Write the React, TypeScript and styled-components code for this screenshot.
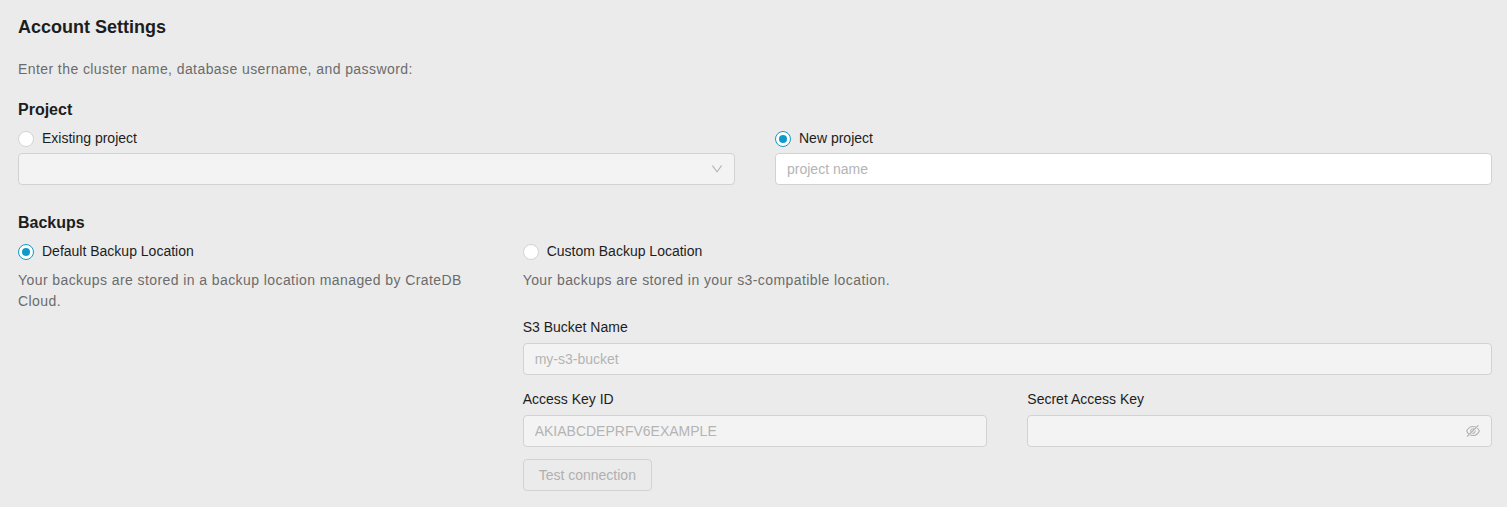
import React, { useState } from "react";
import styled, { createGlobalStyle, css } from "styled-components";
import { AiOutlineDown, AiOutlineEyeInvisible } from "react-icons/ai";

const GlobalStyle = createGlobalStyle`
  *, *::before, *::after { box-sizing: border-box; }
  body {
    margin: 0;
    background: #ebebeb;
    color: #1d1d1d;
    font-family: "Liberation Sans", Arial, Helvetica, sans-serif;
    font-size: 14px;
    line-height: 22px;
  }
`;

const Page = styled.main`
  padding: 13px 15px 16px 18px;
`;

const Title = styled.h1`
  margin: 0 0 18px;
  font-size: 18px;
  line-height: 28px;
`;

const Section = styled.section`
  margin-top: 26px;
`;

const SectionTitle = styled.h2`
  margin: 0 0 5px;
  font-size: 16px;
  line-height: 24px;
`;

const Description = styled.p`
  margin: 0;
  color: #6b6b6b;
  line-height: 21px;
  letter-spacing: 0.03em;
`;

const Intro = styled(Description)`
  margin-bottom: 18px;
`;

const Columns = styled.div<{ $count: number }>`
  display: grid;
  grid-template-columns: repeat(${(p) => p.$count}, minmax(0, 1fr));
  column-gap: 40px;
`;

const Column = styled.div<{ $span?: number }>`
  grid-column: span ${(p) => p.$span ?? 1};
`;

const RadioLabel = styled.label<{ $spaced?: boolean }>`
  display: flex;
  align-items: center;
  gap: 8px;
  width: fit-content;
  margin-bottom: ${(p) => (p.$spaced ? 8 : 4)}px;
  cursor: pointer;
`;

const Radio = styled.input.attrs({ type: "radio" })`
  appearance: none;
  display: grid;
  place-content: center;
  width: 16px;
  height: 16px;
  margin: 2px 0 0;
  border: 1px solid #d4d4d4;
  border-radius: 50%;
  background: #fff;

  &:checked {
    border-color: #0f9bc8;
  }

  &:checked::before {
    content: "";
    width: 8px;
    height: 8px;
    border-radius: 50%;
    background: #0f9bc8;
  }
`;

const control = css`
  display: block;
  width: 100%;
  height: 32px;
  margin: 0;
  padding: 0 11px;
  border: 1px solid #d2d2d2;
  border-radius: 4px;
  background: #fff;
  color: #1d1d1d;
  font: inherit;

  &:disabled {
    background: #f3f3f3;
    color: #b4b4b4;
    opacity: 1;
    cursor: not-allowed;
  }
`;

const TextInput = styled.input`
  ${control}

  &::placeholder {
    color: #b4b4b4;
    opacity: 1;
  }
`;

const Select = styled.select`
  ${control}
  appearance: none;
`;

const ControlWrap = styled.div`
  position: relative;
`;

const ControlIcon = styled.span`
  position: absolute;
  top: 0;
  right: 11px;
  height: 32px;
  display: flex;
  align-items: center;
  color: #b4b4b4;
  pointer-events: none;
`;

const Field = styled.div`
  margin-bottom: 12px;
`;

const FieldLabel = styled.label`
  display: block;
  margin-bottom: 4px;
  line-height: 24px;
`;

const Fields = styled.div`
  margin-top: 24px;
`;

const Button = styled.button`
  display: block;
  height: 32px;
  padding: 0 15px;
  border: 1px solid #d2d2d2;
  border-radius: 4px;
  background: transparent;
  color: #1d1d1d;
  font: inherit;
  cursor: pointer;

  &:disabled {
    color: #b0b0b0;
    cursor: not-allowed;
  }
`;

export default function App() {
  const [project, setProject] = useState("new");
  const [backup, setBackup] = useState("default");
  const custom = backup === "custom";

  return (
    <Page>
      <GlobalStyle />
      <Title>Account Settings</Title>
      <Intro>Enter the cluster name, database username, and password:</Intro>

      <section>
        <SectionTitle>Project</SectionTitle>
        <Columns $count={2}>
          <Column>
            <RadioLabel>
              <Radio
                name="project"
                checked={project === "existing"}
                onChange={() => setProject("existing")}
              />
              Existing project
            </RadioLabel>
            <ControlWrap>
              <Select aria-label="Existing project" disabled={project !== "existing"} />
              <ControlIcon>
                <AiOutlineDown size={14} />
              </ControlIcon>
            </ControlWrap>
          </Column>
          <Column>
            <RadioLabel>
              <Radio
                name="project"
                checked={project === "new"}
                onChange={() => setProject("new")}
              />
              New project
            </RadioLabel>
            <TextInput
              type="text"
              aria-label="Project name"
              placeholder="project name"
              disabled={project !== "new"}
            />
          </Column>
        </Columns>
      </section>

      <Section>
        <SectionTitle>Backups</SectionTitle>
        <Columns $count={3}>
          <Column>
            <RadioLabel $spaced>
              <Radio
                name="backup"
                checked={!custom}
                onChange={() => setBackup("default")}
              />
              Default Backup Location
            </RadioLabel>
            <Description>
              Your backups are stored in a backup location managed by CrateDB Cloud.
            </Description>
          </Column>
          <Column $span={2}>
            <RadioLabel $spaced>
              <Radio
                name="backup"
                checked={custom}
                onChange={() => setBackup("custom")}
              />
              Custom Backup Location
            </RadioLabel>
            <Description>Your backups are stored in your s3-compatible location.</Description>
            <Fields>
              <Field>
                <FieldLabel htmlFor="bucket">S3 Bucket Name</FieldLabel>
                <TextInput id="bucket" type="text" placeholder="my-s3-bucket" disabled={!custom} />
              </Field>
              <Columns $count={2}>
                <Field>
                  <FieldLabel htmlFor="access-key">Access Key ID</FieldLabel>
                  <TextInput
                    id="access-key"
                    type="text"
                    placeholder="AKIABCDEPRFV6EXAMPLE"
                    disabled={!custom}
                  />
                </Field>
                <Field>
                  <FieldLabel htmlFor="secret-key">Secret Access Key</FieldLabel>
                  <ControlWrap>
                    <TextInput id="secret-key" type="password" disabled={!custom} />
                    <ControlIcon>
                      <AiOutlineEyeInvisible size={16} />
                    </ControlIcon>
                  </ControlWrap>
                </Field>
              </Columns>
              <Button type="button" disabled={!custom}>
                Test connection
              </Button>
            </Fields>
          </Column>
        </Columns>
      </Section>
    </Page>
  );
}
